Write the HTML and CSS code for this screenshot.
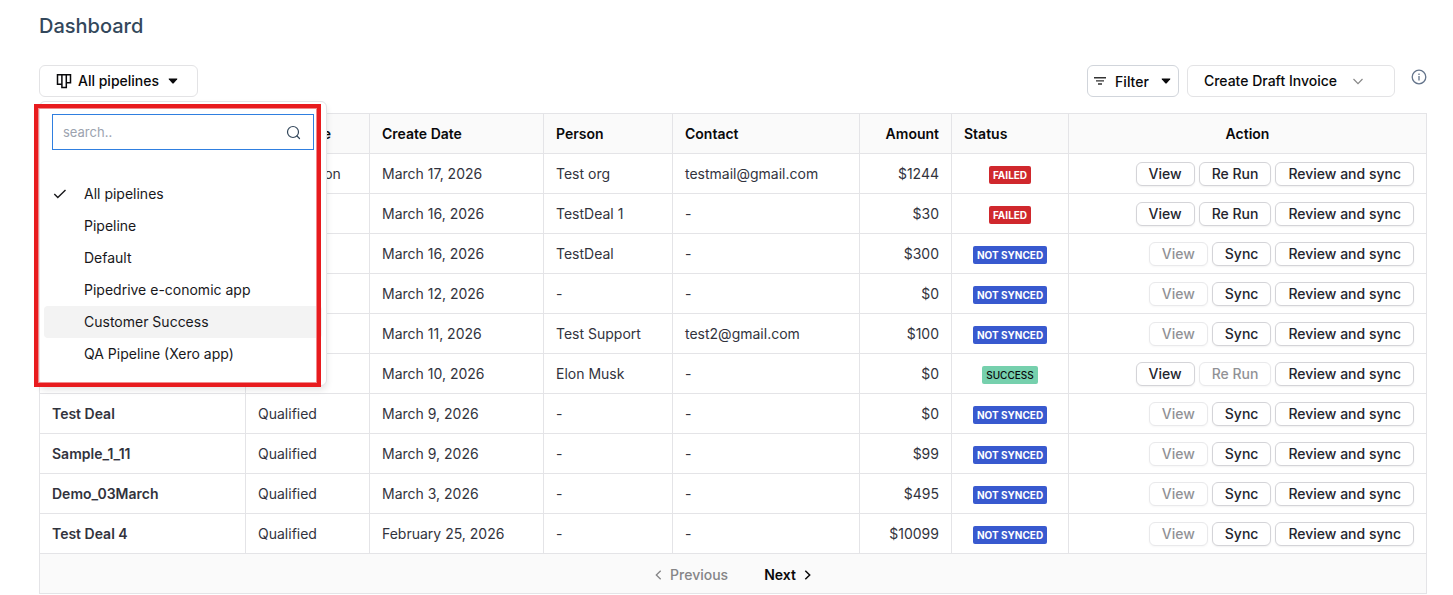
FILE: index.html
```
<!DOCTYPE html>
<html lang="en">
<head>
<meta charset="utf-8">
<title>Dashboard</title>
<link rel="stylesheet" href="styles.css">
</head>
<body>
<main class="page">
<h1 class="title">Dashboard</h1>
<div class="toolbar">
  <div class="picker">
    <button class="btn picker-btn" type="button" aria-expanded="true">
      <svg width="16" height="16" viewBox="0 0 16 16" fill="none" stroke="currentColor" stroke-width="1.5"><path d="M1.500 1.800h13v8h-4.200v4.700H5.900v-3.200H1.500zM5.900 1.800v9.500M10.300 1.800v8"/></svg>
      <span>All pipelines</span>
      <svg class="caret" width="10" height="6" viewBox="0 0 10 6" fill="currentColor"><path d="M1 .5h8q.6.2.2.8L5.500 5.400q-.5.400-1 0L.8 1.300Q.4.700 1 .5z"/></svg>
    </button>
    <div class="menu">
      <label class="search">
        <input type="text" placeholder="search.." aria-label="Search pipelines">
        <svg width="15" height="15" viewBox="0 0 15 15" fill="none" stroke="currentColor" stroke-width="1.2" stroke-linecap="round"><circle cx="7" cy="7" r="5.500"/><path d="M11 11l2.500 2.500"/></svg>
      </label>
      <ul class="options">
        <li><button type="button" class="option"><svg width="14" height="10" viewBox="0 0 14 10" fill="none" stroke="currentColor" stroke-width="1.400"><path d="M1.300 5l3.500 3.500L12.500 1"/></svg>All pipelines</button></li>
        <li><button type="button" class="option">Pipeline</button></li>
        <li><button type="button" class="option">Default</button></li>
        <li><button type="button" class="option">Pipedrive e-conomic app</button></li>
        <li><button type="button" class="option active">Customer Success</button></li>
        <li><button type="button" class="option">QA Pipeline (Xero app)</button></li>
      </ul>
    </div>
    <div class="highlight"></div>
  </div>
  <div class="tools">
    <button class="btn filter-btn" type="button">
      <svg width="12" height="8" viewBox="0 0 12 8" fill="none" stroke="#333" stroke-width="1.400"><path d="M0 .8h12M2 3.900h8M4 7h4"/></svg>
      <span class="filter-text">Filter</span>
      <svg class="caret" width="10" height="6" viewBox="0 0 10 6" fill="currentColor"><path d="M1 .5h8q.6.2.2.8L5.500 5.400q-.5.400-1 0L.8 1.300Q.4.700 1 .5z"/></svg>
    </button>
    <button class="btn draft-btn" type="button">
      <span>Create Draft Invoice</span>
      <svg width="10" height="7" viewBox="0 0 10 7" fill="none" stroke="#888" stroke-width="1.200"><path d="M.5 1L5 5.700 9.500 1"/></svg>
    </button>
    <button class="info" type="button" aria-label="Information">
      <svg width="16" height="16" viewBox="0 0 16 16" fill="none" stroke="currentColor" stroke-width="1.300"><circle cx="8" cy="8" r="6.800"/><path d="M8 7v4.500M8 4.500V6"/></svg>
    </button>
  </div>
</div>
<table class="deals">
  <colgroup><col class="c-name"><col class="c-stage"><col class="c-date"><col class="c-person"><col class="c-contact"><col class="c-amount"><col class="c-status"><col class="c-action"></colgroup>
  <thead><tr><th></th><th>Deal Stage</th><th>Create Date</th><th>Person</th><th>Contact</th><th class="num">Amount</th><th>Status</th><th class="mid">Action</th></tr></thead>
  <tbody>
    <tr><td></td><td>Qualification</td><td>March 17, 2026</td><td>Test org</td><td>testmail@gmail.com</td><td class="num">$1244</td><td class="mid"><span class="tag failed">FAILED</span></td><td><div class="actions"><button type="button">View</button><button type="button">Re Run</button><button type="button">Review and sync</button></div></td></tr>
    <tr><td></td><td></td><td>March 16, 2026</td><td>TestDeal 1</td><td>-</td><td class="num">$30</td><td class="mid"><span class="tag failed">FAILED</span></td><td><div class="actions"><button type="button">View</button><button type="button">Re Run</button><button type="button">Review and sync</button></div></td></tr>
    <tr><td></td><td></td><td>March 16, 2026</td><td>TestDeal</td><td>-</td><td class="num">$300</td><td class="mid"><span class="tag">NOT SYNCED</span></td><td><div class="actions"><button type="button" disabled>View</button><button type="button">Sync</button><button type="button">Review and sync</button></div></td></tr>
    <tr><td></td><td></td><td>March 12, 2026</td><td>-</td><td>-</td><td class="num">$0</td><td class="mid"><span class="tag">NOT SYNCED</span></td><td><div class="actions"><button type="button" disabled>View</button><button type="button">Sync</button><button type="button">Review and sync</button></div></td></tr>
    <tr><td></td><td></td><td>March 11, 2026</td><td>Test Support</td><td>test2@gmail.com</td><td class="num">$100</td><td class="mid"><span class="tag">NOT SYNCED</span></td><td><div class="actions"><button type="button" disabled>View</button><button type="button">Sync</button><button type="button">Review and sync</button></div></td></tr>
    <tr><td></td><td></td><td>March 10, 2026</td><td>Elon Musk</td><td>-</td><td class="num">$0</td><td class="mid"><span class="tag success">SUCCESS</span></td><td><div class="actions"><button type="button">View</button><button type="button" disabled>Re Run</button><button type="button">Review and sync</button></div></td></tr>
    <tr><td class="name">Test Deal</td><td>Qualified</td><td>March 9, 2026</td><td>-</td><td>-</td><td class="num">$0</td><td class="mid"><span class="tag">NOT SYNCED</span></td><td><div class="actions"><button type="button" disabled>View</button><button type="button">Sync</button><button type="button">Review and sync</button></div></td></tr>
    <tr><td class="name">Sample_1_11</td><td>Qualified</td><td>March 9, 2026</td><td>-</td><td>-</td><td class="num">$99</td><td class="mid"><span class="tag">NOT SYNCED</span></td><td><div class="actions"><button type="button" disabled>View</button><button type="button">Sync</button><button type="button">Review and sync</button></div></td></tr>
    <tr><td class="name">Demo_03March</td><td>Qualified</td><td>March 3, 2026</td><td>-</td><td>-</td><td class="num">$495</td><td class="mid"><span class="tag">NOT SYNCED</span></td><td><div class="actions"><button type="button" disabled>View</button><button type="button">Sync</button><button type="button">Review and sync</button></div></td></tr>
    <tr><td class="name">Test Deal 4</td><td>Qualified</td><td>February 25, 2026</td><td>-</td><td>-</td><td class="num">$10099</td><td class="mid"><span class="tag">NOT SYNCED</span></td><td><div class="actions"><button type="button" disabled>View</button><button type="button">Sync</button><button type="button">Review and sync</button></div></td></tr>
  </tbody>
  <tfoot><tr><td colspan="8"><div class="pager">
    <button type="button" class="page-btn" disabled><svg width="7" height="10" viewBox="0 0 7 10" fill="none" stroke="currentColor" stroke-width="1.300"><path d="M5.700.7L1.300 5l4.400 4.300"/></svg>Previous</button>
    <button type="button" class="page-btn">Next<svg width="7" height="10" viewBox="0 0 7 10" fill="none" stroke="currentColor" stroke-width="1.500"><path d="M1.300.7L5.700 5 1.300 9.300"/></svg></button>
  </div></td></tr></tfoot>
</table>
</main>
</body>
</html>
```
FILE: styles.css
```
* { box-sizing: border-box; }
body {
  margin: 0;
  background: #fff;
  color: #32333d;
  font: 14px/20px Inter, sans-serif;
}
button, input { font: inherit; color: inherit; }
svg { flex: none; }
.page { padding: 12px 26px 0 39px; }
.title {
  margin: 0 0 25px;
  font-size: 20px;
  line-height: 28px;
  font-weight: 500;
  color: #33475b;
}
.toolbar {
  display: flex;
  justify-content: space-between;
  margin-bottom: 16px;
}
.btn {
  display: flex;
  align-items: center;
  height: 32px;
  border: 1px solid #e3e3e5;
  border-radius: 6px;
  background: #fff;
  color: #09090b;
  font-weight: 500;
}
.picker { position: relative; }
.picker-btn { gap: 6px; padding: 0 19px 0 16px; }
.menu {
  position: absolute;
  z-index: 1;
  top: 100%;
  left: 0;
  width: 288px;
  margin-top: 4px;
  padding: 12px 4px 15px;
  border: 1px solid #e4e4e7;
  border-radius: 6px;
  background: #fff;
  box-shadow: 0 4px 6px rgba(0, 0, 0, .1);
  color: #18181b;
}
.search {
  display: flex;
  align-items: center;
  height: 36px;
  margin: 0 8px 28px;
  padding: 0 12px 0 10px;
  border: 1px solid #2f7fe0;
  color: #33475b;
}
.search input {
  flex: 1;
  min-width: 0;
  padding: 0;
  border: 0;
  outline: 0;
  background: none;
  font-size: 13px;
}
.search input::placeholder { color: #9ca3af; }
.options { margin: 0; padding: 0; list-style: none; }
.option {
  display: flex;
  align-items: center;
  width: 100%;
  height: 32px;
  padding: 0 0 0 40px;
  border: 0;
  border-radius: 4px;
  background: none;
}
.option svg { margin: 0 17px 0 -31px; }
.active { background: #f3f3f3; }
.highlight {
  position: absolute;
  z-index: 2;
  top: 39px;
  left: -5px;
  width: 287px;
  height: 283px;
  border: 4px solid #e81b1e;
  box-shadow: inset 0 0 0 1px #f08a8c;
  pointer-events: none;
}
.tools { display: flex; }
.filter-btn { gap: 9px; padding: 0 7px 0 6px; border-color: #d1d5db; }
.filter-text { padding-top: 2px; }
.caret { margin-left: 3px; }
.draft-btn { gap: 16px; margin-left: 8px; padding: 0 31px 0 16px; }
.info {
  display: flex;
  align-self: flex-start;
  margin: 4px 0 0 16px;
  padding: 0;
  border: 0;
  background: none;
  color: #64748b;
}
.deals {
  width: 100%;
  border-collapse: collapse;
  table-layout: fixed;
}
.c-name { width: 206px; }
.c-stage { width: 124px; }
.c-date { width: 174px; }
.c-person { width: 129px; }
.c-contact { width: 187px; }
.c-amount { width: 92px; }
.c-status { width: 117px; }
.deals th, .deals td {
  height: 40px;
  padding: 0 12px;
  border: 1px solid #e4e4e7;
  text-align: left;
  white-space: nowrap;
}
.deals th {
  background: #fafafa;
  color: #09090b;
  font-weight: 600;
}
.deals .num { text-align: right; }
.deals .mid { text-align: center; }
.name { font-weight: 600; }
.tag {
  display: inline-block;
  margin-top: 2px;
  padding: 0 4px;
  border-radius: 2px;
  background: #3859cf;
  color: #fff;
  font-size: 10px;
  line-height: 18px;
  font-weight: 700;
  vertical-align: middle;
}
.failed { background: #d0282d; }
.success { background: #76d0ad; color: #09090b; font-weight: 500; }
.actions { display: flex; justify-content: flex-end; gap: 4px; }
.actions button {
  height: 24px;
  padding: 0 12px;
  border: 1px solid #d4d4d8;
  border-radius: 6px;
  background: #fff;
  box-shadow: 0 1px 2px rgba(0, 0, 0, .06);
  color: #24252e;
  line-height: 20px;
  font-weight: 500;
}
.actions button:disabled { opacity: .5; }
.deals tfoot td { background: #fafafa; }
.pager { display: flex; justify-content: center; gap: 36px; }
.page-btn {
  display: flex;
  align-items: center;
  gap: 8px;
  padding: 2px 0 0;
  border: 0;
  background: none;
  color: #09090b;
  font-weight: 600;
}
.page-btn:disabled { color: #858587; font-weight: 500; }
```
